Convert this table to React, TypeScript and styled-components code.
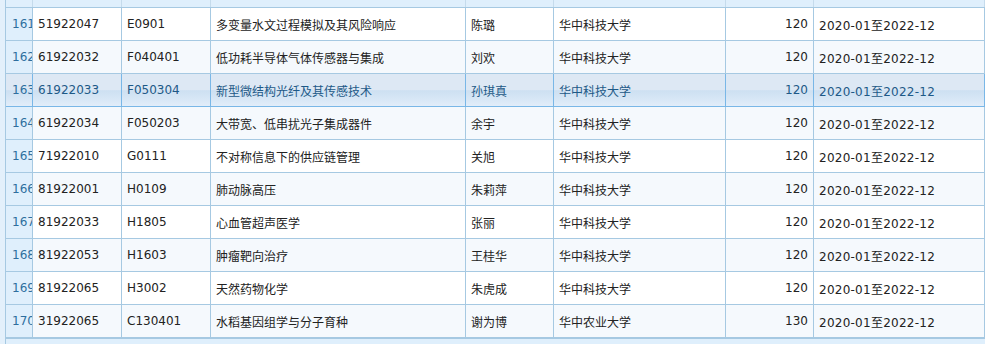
import React, { useState } from 'react'
import styled, { createGlobalStyle, css } from 'styled-components'

interface Project {
  no: number
  approval: string
  code: string
  title: string
  leader: string
  org: string
  amount: number
  period: string
}

const rows: Project[] = [
  { no: 161, approval: '51922047', code: 'E0901', title: '多变量水文过程模拟及其风险响应', leader: '陈璐', org: '华中科技大学', amount: 120, period: '2020-01至2022-12' },
  { no: 162, approval: '61922032', code: 'F040401', title: '低功耗半导体气体传感器与集成', leader: '刘欢', org: '华中科技大学', amount: 120, period: '2020-01至2022-12' },
  { no: 163, approval: '61922033', code: 'F050304', title: '新型微结构光纤及其传感技术', leader: '孙琪真', org: '华中科技大学', amount: 120, period: '2020-01至2022-12' },
  { no: 164, approval: '61922034', code: 'F050203', title: '大带宽、低串扰光子集成器件', leader: '余宇', org: '华中科技大学', amount: 120, period: '2020-01至2022-12' },
  { no: 165, approval: '71922010', code: 'G0111', title: '不对称信息下的供应链管理', leader: '关旭', org: '华中科技大学', amount: 120, period: '2020-01至2022-12' },
  { no: 166, approval: '81922001', code: 'H0109', title: '肺动脉高压', leader: '朱莉萍', org: '华中科技大学', amount: 120, period: '2020-01至2022-12' },
  { no: 167, approval: '81922033', code: 'H1805', title: '心血管超声医学', leader: '张丽', org: '华中科技大学', amount: 120, period: '2020-01至2022-12' },
  { no: 168, approval: '81922053', code: 'H1603', title: '肿瘤靶向治疗', leader: '王桂华', org: '华中科技大学', amount: 120, period: '2020-01至2022-12' },
  { no: 169, approval: '81922065', code: 'H3002', title: '天然药物化学', leader: '朱虎成', org: '华中科技大学', amount: 120, period: '2020-01至2022-12' },
  { no: 170, approval: '31922065', code: 'C130401', title: '水稻基因组学与分子育种', leader: '谢为博', org: '华中农业大学', amount: 130, period: '2020-01至2022-12' },
]

// rownum | 批准号 | 申请代码 | 项目名称 | 负责人 | 依托单位 | 金额 | 起止年月
const COLS = '27px 89px 89px 255px 88px 172px 88px 171px'

const GlobalStyle = createGlobalStyle`
  html, body {
    margin: 0;
    padding: 0;
    background: #ffffff;
  }
  body {
    font-family: 'DejaVu Sans', 'Noto Sans CJK SC', sans-serif;
    font-size: 12px;
  }
`

const Grid = styled.div`
  width: 985px;
  padding-left: 5px;
  box-sizing: border-box;
  background: #e3f0fb;
`

const Body = styled.div`
  border-left: 1px solid #a6c9e2;
`

const HeaderStrip = styled.div`
  display: grid;
  grid-template-columns: ${COLS};
  height: 8px;
  box-sizing: border-box;
  background: #dfeffc;
  border-bottom: 1px solid #a6c9e2;
`

const HeaderCell = styled.div`
  border-right: 1px solid #c5dbec;
`

const Row = styled.div<{ $alt: boolean; $hover: boolean }>`
  display: grid;
  grid-template-columns: ${COLS};
  height: 33px;
  box-sizing: border-box;
  border-bottom: 1px solid #a6c9e2;
  background: ${({ $alt }) => ($alt ? '#f5f9fd' : '#ffffff')};
  color: #222222;
  ${({ $hover }) =>
    $hover &&
    css`
      background: linear-gradient(
        to bottom,
        #dde8f4 0%,
        #dde8f4 50%,
        #cde0f2 52%,
        #d6e6f5 75%,
        #e2edf9 100%
      );
      border-bottom-color: #79b7e7;
      color: #1d5987;
    `}
`

const Cell = styled.div<{ $right?: boolean; $hover?: boolean }>`
  display: flex;
  align-items: center;
  justify-content: ${({ $right }) => ($right ? 'flex-end' : 'flex-start')};
  padding: 0 5px;
  box-sizing: border-box;
  border-right: 1px solid ${({ $hover }) => ($hover ? '#79b7e7' : '#a6c9e2')};
  white-space: nowrap;
  overflow: hidden;
`

const NumCell = styled(Cell)`
  background: ${({ $hover }) => ($hover ? 'transparent' : '#dfeffc')};
  color: #2e6e9e;
  padding: 0 0 0 6px;
`

const DateText = styled.span`
  letter-spacing: 0.25px;
`

const Footer = styled.div`
  height: 5px;
  background: #dfeffc;
  border-top: 1px solid #a6c9e2;
`

const App: React.FC = () => {
  const [hovered, setHovered] = useState<number | null>(163)

  return (
    <>
      <GlobalStyle />
      <Grid>
        <Body>
          <HeaderStrip>
            {Array.from({ length: 8 }).map((_, i) => (
              <HeaderCell key={i} />
            ))}
          </HeaderStrip>
          {rows.map((r, i) => {
            const hot = hovered === r.no
            return (
              <Row
                key={r.no}
                $alt={i % 2 === 1}
                $hover={hot}
                onMouseEnter={() => setHovered(r.no)}
              >
                <NumCell $hover={hot}>{r.no}</NumCell>
                <Cell $hover={hot}>{r.approval}</Cell>
                <Cell $hover={hot}>{r.code}</Cell>
                <Cell $hover={hot}>{r.title}</Cell>
                <Cell $hover={hot}>{r.leader}</Cell>
                <Cell $hover={hot}>{r.org}</Cell>
                <Cell $hover={hot} $right>
                  {r.amount}
                </Cell>
                <Cell $hover={hot}>
                  <DateText>{r.period}</DateText>
                </Cell>
              </Row>
            )
          })}
          <Footer />
        </Body>
      </Grid>
    </>
  )
}

export default App
